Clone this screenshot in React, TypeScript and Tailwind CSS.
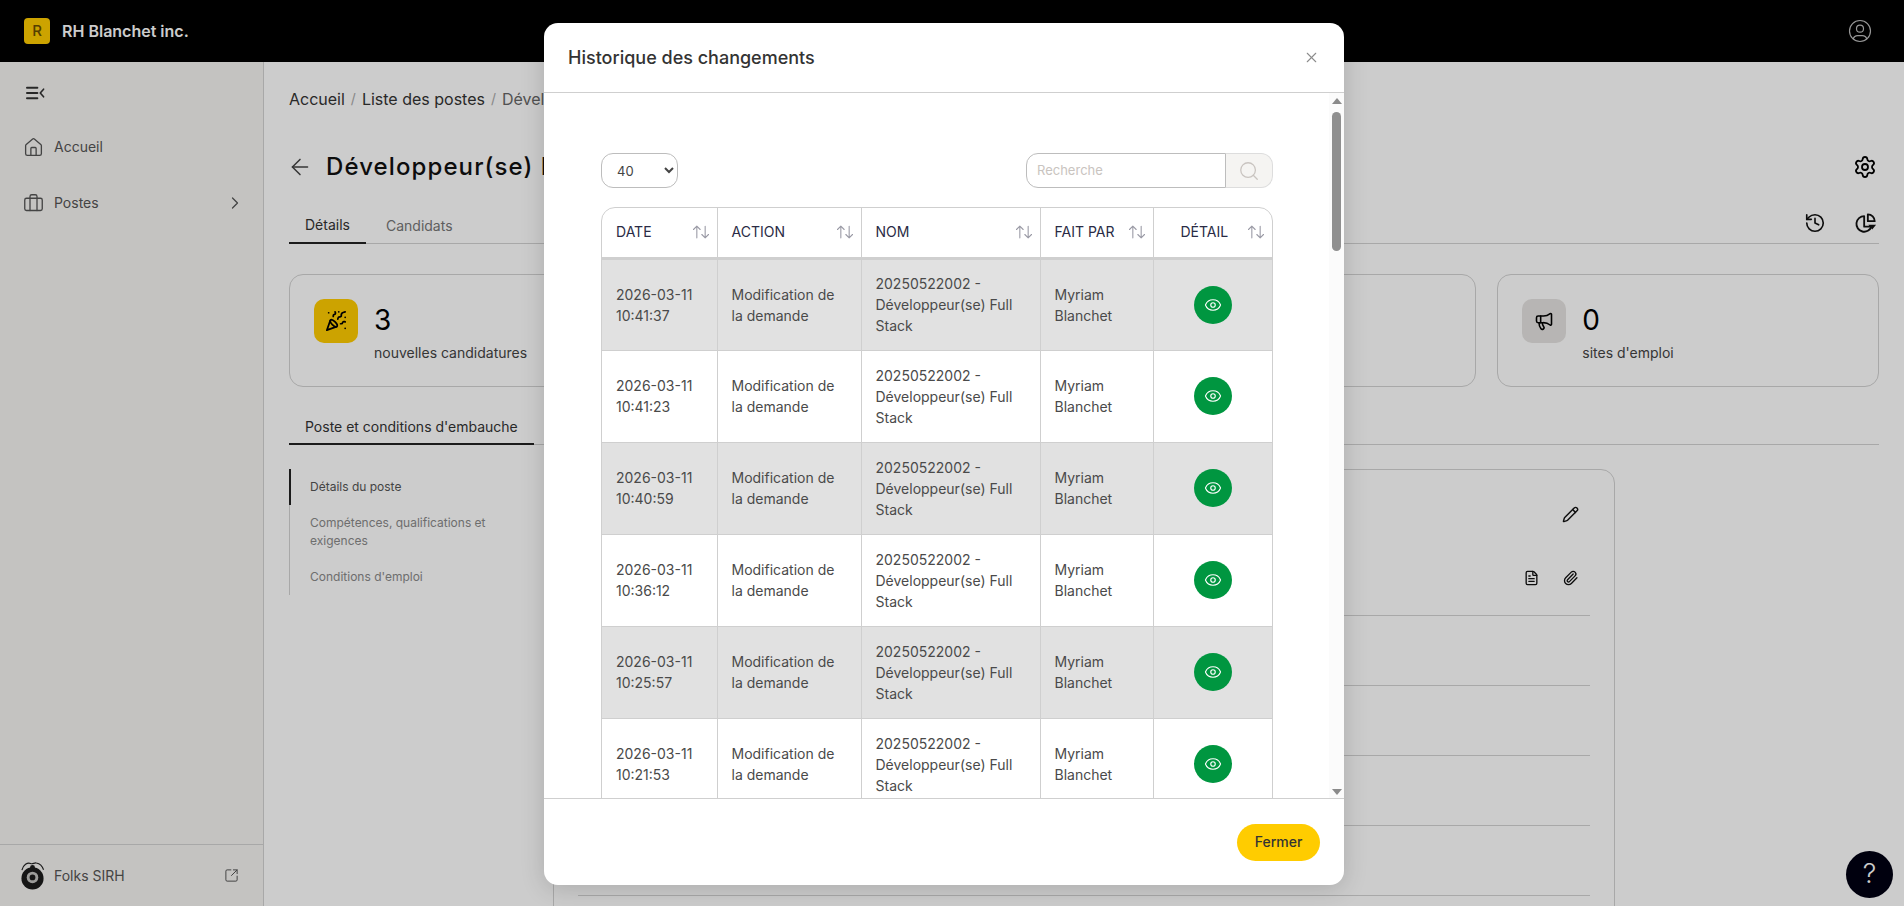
import React from 'react';
import {
  ArrowLeft,
  Briefcase,
  ChevronRight,
  Eye,
  FileText,
  History,
  House,
  Megaphone,
  Paperclip,
  PartyPopper,
  Pencil,
  Search,
  Settings,
  SquareArrowOutUpRight,
  X,
} from 'lucide-react';
import { TbArrowsSort, TbUserCircle } from 'react-icons/tb';

const rows = ['10:41:37', '10:41:23', '10:40:59', '10:36:12', '10:25:57', '10:21:53'];

const columns = [
  { label: 'Date', width: 'w-[115px]', pad: 'pl-[14px]' },
  { label: 'Action', width: 'w-[144px]', pad: 'pl-[14px]' },
  { label: 'Nom', width: 'w-[179px]', pad: 'pl-[14px]' },
  { label: 'Fait par', width: 'w-[113px]', pad: 'pl-[14px]' },
  { label: 'Détail', width: 'w-[119px]', pad: 'pl-[27px]' },
];

const StatCard = ({
  icon,
  iconBg,
  value,
  label,
}: {
  icon?: React.ReactNode;
  iconBg?: string;
  value?: string;
  label?: string;
}) => (
  <div className="h-[113px] rounded-[14px] border border-[#d2d2d2] flex items-start pl-[24px] pt-[24px]">
    {icon && (
      <div className={`w-[44px] h-[44px] rounded-[10px] flex items-center justify-center text-black ${iconBg}`}>{icon}</div>
    )}
    {value && (
      <div className="ml-4">
        <div className="text-[28px] leading-[44px] text-black -mt-[1px]">{value}</div>
        <div className="text-sm leading-5 mt-[1px] text-[#444]">{label}</div>
      </div>
    )}
  </div>
);

const PieIcon = () => (
  <svg viewBox="0 0 24 24" className="w-[22px] h-[22px]" fill="none" stroke="currentColor" strokeWidth="2" strokeLinejoin="round">
    <path d="M10 4.5a8.5 8.5 0 1 0 8 11.5h-8z" />
    <path d="M14 2.5a7.5 7.5 0 0 1 7.5 7.5H14z" />
    <path d="M14.5 14h8.5l-4.2 5z" fill="currentColor" stroke="none" />
  </svg>
);

const MenuToggleIcon = () => (
  <svg viewBox="0 0 20 14" className="w-[19px] h-[14px]" fill="none" stroke="currentColor" strokeWidth="2" strokeLinecap="round" strokeLinejoin="round">
    <path d="M1 1.5h11M1 7h11M1 12.5h11" />
    <path d="M18.5 3 15 7l3.5 4" strokeWidth="1.7" />
  </svg>
);

const FolksLogo = () => (
  <svg viewBox="0 0 26 30" className="w-[25px] h-[29px]">
    <path d="M2 9.5C3 4 8 1 11 2.5c2 1 4-1 6 -.5 4 .8 6.5 4 7.5 7" fill="none" stroke="#222" strokeWidth="1.2" />
    <circle cx="13" cy="18" r="11.5" fill="#1c1c1c" />
    <circle cx="13" cy="17" r="6" fill="#c4c3c1" />
    <circle cx="13" cy="17" r="3" fill="#1c1c1c" />
    <circle cx="13" cy="6.5" r="2.5" fill="#1c1c1c" />
  </svg>
);

export default function App() {
  return (
    <div className="relative h-[906px] overflow-hidden flex flex-col bg-white text-[#3d3d3d] [font-family:Inter,'Liberation_Sans',sans-serif]">
      <header className="h-[62px] shrink-0 bg-black flex items-center justify-between pl-[24px] pr-[30px]">
        <div className="flex items-center gap-3">
          <div className="w-[26px] h-[26px] rounded-[4px] bg-[#ffcc00] text-[#6b4f00] flex items-center justify-center text-[15px] font-medium">R</div>
          <span className="text-white font-semibold text-base">RH Blanchet inc.</span>
        </div>
        <TbUserCircle className="w-[28px] h-[28px] text-[#bdbdbd]" strokeWidth={1} />
      </header>

      <div className="flex-1 min-h-0 flex">
        <aside className="w-[264px] shrink-0 bg-[#f5f4f2] border-r border-[#d2d2d2] flex flex-col text-[#555]">
          <div className="flex-1 pl-[23px] pr-[18px]">
            <div className="pt-[24px] pl-[3px] text-[#333]">
              <MenuToggleIcon />
            </div>
            <div className="flex items-center gap-[10px] mt-[33px] h-[28px]">
              <House className="w-[21px] h-[21px]" strokeWidth={1.5} />
              <span className="text-sm">Accueil</span>
            </div>
            <div className="flex items-center gap-[10px] mt-[28px] h-[28px]">
              <Briefcase className="w-[21px] h-[21px]" strokeWidth={1.5} />
              <span className="text-sm flex-1">Postes</span>
              <ChevronRight className="w-[20px] h-[20px]" strokeWidth={1.5} />
            </div>
          </div>
          <div className="h-[62px] border-t border-[#d2d2d2] flex items-center pl-[20px] pr-[24px] gap-[9px]">
            <FolksLogo />
            <span className="text-sm flex-1">Folks SIRH</span>
            <SquareArrowOutUpRight className="w-[15px] h-[15px]" strokeWidth={1.6} />
          </div>
        </aside>

        <main className="flex-1 min-w-0 px-[25px] pt-[25px]">
          <nav className="flex items-center gap-[6px] text-base leading-6 text-[#333]">
            <span>Accueil</span>
            <span className="text-[#aaa] text-sm">/</span>
            <span>Liste des postes</span>
            <span className="text-[#aaa] text-sm">/</span>
            <span className="text-[#666]">Développeur(se) Full Stack</span>
          </nav>

          <div className="mt-[38px] h-[36px] flex items-center justify-between">
            <div className="flex items-center gap-[13px]">
              <ArrowLeft className="w-[26px] h-[26px] text-[#444] -ml-[2px]" strokeWidth={1.4} />
              <h1 className="text-[24px] font-medium tracking-[1.1px] text-[#111]">Développeur(se) Full Stack</h1>
            </div>
            <Settings className="w-[24px] h-[24px] text-black mr-[2px]" strokeWidth={1.8} />
          </div>

          <div className="mt-[23px] h-[36px] flex items-stretch border-b border-[#d2d2d2]">
            <div className="px-4 flex items-center text-sm text-[#333] border-b-2 border-[#222] -mb-[1px]">Détails</div>
            <div className="ml-[4px] px-4 flex items-center text-sm text-[#777]">Candidats</div>
            <div className="ml-auto flex items-center gap-[29px] pr-[2px] pb-[6px] text-[#111]">
              <History className="w-[22px] h-[22px]" strokeWidth={1.8} />
              <PieIcon />
            </div>
          </div>

          <div className="mt-[30px] grid grid-cols-4 gap-[21px]">
            <StatCard icon={<PartyPopper className="w-[22px] h-[22px]" strokeWidth={1.9} />} iconBg="bg-[#ffcc00]" value="3" label="nouvelles candidatures" />
            <StatCard />
            <StatCard />
            <StatCard icon={<Megaphone className="w-[20px] h-[20px]" strokeWidth={1.9} />} iconBg="bg-[#e5e3e1]" value="0" label="sites d'emploi" />
          </div>

          <div className="mt-[24px] h-[34px] flex border-b border-[#d2d2d2]">
            <div className="w-[245px] pl-4 flex items-center text-sm text-[#333] border-b-2 border-[#222] -mb-[1px]">Poste et conditions d'embauche</div>
          </div>

          <div className="mt-[24px] flex gap-[24px]">
            <div className="w-[240px] h-[126px] shrink-0 border-l border-[#d2d2d2] text-xs leading-[18px] text-[#8a8a8a]">
              <div className="py-[9px] pl-[19px] -ml-[1px] border-l-2 border-[#222] text-[#555]">Détails du poste</div>
              <div className="py-[9px] pl-[20px] pr-2">Compétences, qualifications et exigences</div>
              <div className="py-[9px] pl-[20px]">Conditions d'emploi</div>
            </div>
            <div className="w-[1062px] h-[600px] shrink-0 rounded-[14px] border border-[#d2d2d2] px-[24px] pt-[36px] text-[#111]">
              <div className="flex justify-end pr-[11px]">
                <Pencil className="w-[17px] h-[17px]" strokeWidth={2} />
              </div>
              <div className="flex justify-end gap-[22px] pr-[11px] mt-[47px] pb-[29px] border-b border-[#d2d2d2]">
                <FileText className="w-[17px] h-[16px]" strokeWidth={2} />
                <Paperclip className="w-[17px] h-[16px]" strokeWidth={2} />
              </div>
              <div className="h-[70px] border-b border-[#d2d2d2]" />
              <div className="h-[70px] border-b border-[#d2d2d2]" />
              <div className="h-[70px] border-b border-[#d2d2d2]" />
              <div className="h-[70px] border-b border-[#d2d2d2]" />
            </div>
          </div>
        </main>
      </div>

      <div className="absolute right-[11px] top-[851px] w-[47px] h-[47px] rounded-full bg-[#000012] text-white flex items-center justify-center text-[27px] font-light">?</div>

      {/* fond du modal */}
      <div className="absolute inset-0 bg-black/20 flex justify-center items-start pt-[23px] pr-[16px]">
        <div className="w-[800px] h-[862px] bg-white rounded-[14px] shadow-[0_4px_24px_rgba(0,0,0,0.16)] flex flex-col overflow-hidden">
          <div className="h-[70px] shrink-0 border-b border-[#cfcfcf] flex items-center justify-between pl-[24px] pr-[24px]">
            <h2 className="text-lg font-medium text-[#333]">Historique des changements</h2>
            <X className="w-[17px] h-[17px] text-[#8c8c8c]" strokeWidth={1.5} />
          </div>

          <div className="flex-1 min-h-0 flex">
            <div className="flex-1 min-w-0 overflow-hidden pl-[57px] pr-[56px] pt-[60px]">
              <div className="flex items-center justify-between">
                <select className="w-[77px] h-[35px] rounded-[12px] border border-[#bdbdbd] pl-[11px] text-[13px] text-[#444]" defaultValue="40">
                  <option>10</option>
                  <option>40</option>
                </select>
                <div className="flex h-[35px] w-[247px]">
                  <input
                    placeholder="Recherche"
                    className="flex-1 min-w-0 rounded-l-[12px] border border-[#bdbdbd] pl-[10px] text-[13px] placeholder:text-[#c9c4c0]"
                  />
                  <div className="w-[47px] rounded-r-[12px] border border-l-0 border-[#ddd] bg-[#f5f4f2] flex items-center justify-center">
                    <Search className="w-[22px] h-[22px] text-[#c9c4c0]" strokeWidth={1.4} />
                  </div>
                </div>
              </div>

              <div className="mt-[19px] rounded-t-[14px] border border-[#cfcfcf] overflow-hidden">
                <table className="w-full table-fixed border-collapse text-sm">
                  <thead>
                    <tr className="h-[50px] border-b-[3px] border-[#cfcfcf]">
                      {columns.map((col, i) => (
                        <th key={col.label} className={`${col.width} ${i > 0 ? 'border-l border-[#cfcfcf]' : ''} font-normal`}>
                          <div className={`flex items-center justify-between ${col.pad} pr-[6px] uppercase text-[#2a2b45]`}>
                            {col.label}
                            <TbArrowsSort className="w-[20px] h-[20px] text-[#9a9aa5]" strokeWidth={1.3} />
                          </div>
                        </th>
                      ))}
                    </tr>
                  </thead>
                  <tbody className="leading-[21px] text-[#4a4a4a]">
                    {rows.map((time, i) => (
                      <tr key={time} className={`h-[92px] border-b border-[#cfcfcf] ${i % 2 === 0 ? 'bg-[#e1e1e1]' : 'bg-white'}`}>
                        <td className="pl-[14px] pr-2">
                          2026-03-11
                          <br />
                          {time}
                        </td>
                        <td className="pl-[14px] pr-4 border-l border-[#cfcfcf]">Modification de la demande</td>
                        <td className="pl-[14px] pr-2 border-l border-[#cfcfcf]">20250522002 - Développeur(se) Full Stack</td>
                        <td className="pl-[14px] pr-2 border-l border-[#cfcfcf]">Myriam Blanchet</td>
                        <td className="border-l border-[#cfcfcf]">
                          <div className="w-[38px] h-[38px] rounded-full bg-[#009640] text-white flex items-center justify-center mx-auto">
                            <Eye className="w-[18px] h-[18px]" strokeWidth={1.5} />
                          </div>
                        </td>
                      </tr>
                    ))}
                  </tbody>
                </table>
              </div>
            </div>

            {/* barre de défilement */}
            <div className="w-[15px] shrink-0 bg-[#fbfbfb] flex flex-col items-center pt-[5px] pb-[3px]">
              <div className="w-0 h-0 border-x-[5px] border-x-transparent border-b-[6px] border-b-[#8a8a8a]" />
              <div className="w-[9px] h-[139px] mt-[8px] rounded-full bg-[#8f8f8f]" />
              <div className="flex-1" />
              <div className="w-0 h-0 border-x-[5px] border-x-transparent border-t-[6px] border-t-[#8a8a8a]" />
            </div>
          </div>

          <div className="h-[87px] shrink-0 border-t border-[#cfcfcf] flex items-center justify-end pr-[24px]">
            <button className="w-[83px] h-[37px] rounded-full bg-[#ffcc00] text-sm font-medium text-[#333]">Fermer</button>
          </div>
        </div>
      </div>
    </div>
  );
}
